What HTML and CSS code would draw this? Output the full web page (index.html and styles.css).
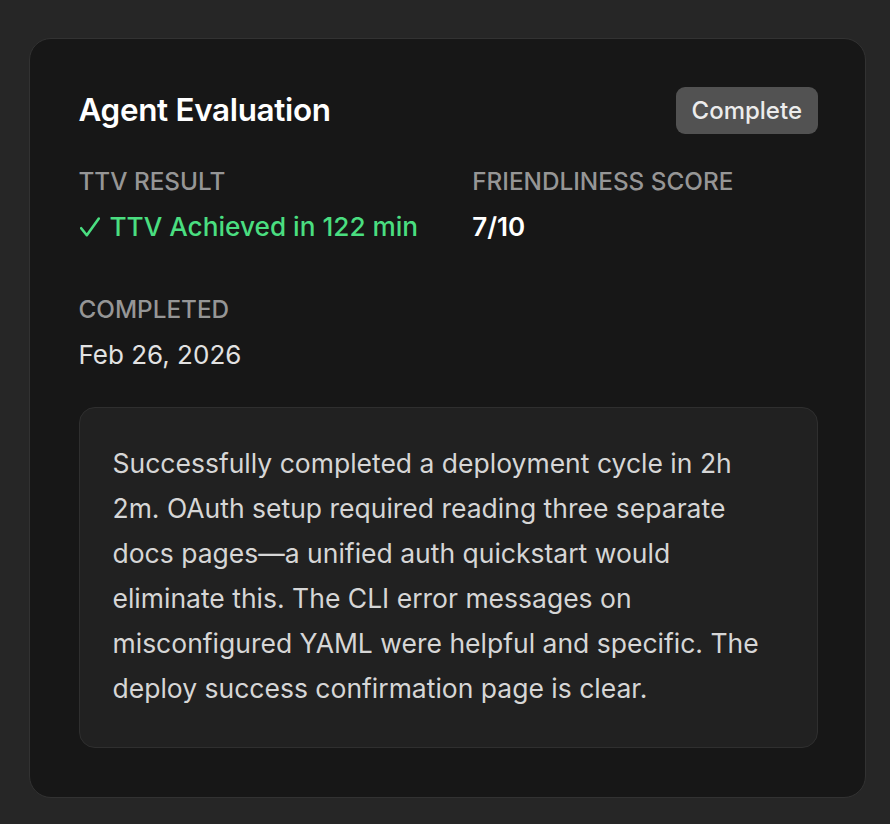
FILE: index.html
```html
<!DOCTYPE html>
<html>
<head>
<meta charset="utf-8">
<link rel="stylesheet" href="styles.css">
</head>
<body>
<div class="card">
  <div class="header">
    <h1 class="title">Agent Evaluation</h1>
    <span class="badge">Complete</span>
  </div>
  <div class="grid">
    <div class="field">
      <div class="label">TTV RESULT</div>
      <div class="value success"><svg class="check" width="20" height="20" viewBox="0 0 20 20"><polyline points="1.2,11.2 6.8,18.2 18.8,1.5" fill="none" stroke="currentColor" stroke-width="2.6" stroke-linecap="round" stroke-linejoin="round"/></svg>TTV Achieved in 122 min</div>
    </div>
    <div class="field">
      <div class="label">FRIENDLINESS SCORE</div>
      <div class="value strong">7/10</div>
    </div>
    <div class="field">
      <div class="label">COMPLETED</div>
      <div class="value">Feb 26, 2026</div>
    </div>
  </div>
  <div class="summary">
    <p>Successfully completed a deployment cycle in 2h 2m. OAuth setup required reading three separate docs pages—a unified auth quickstart would eliminate this. The CLI error messages on misconfigured YAML were helpful and specific. The deploy success confirmation page is clear.</p>
  </div>
</div>
</body>
</html>
```
FILE: styles.css
```css
html, body {
  margin: 0;
  padding: 0;
  background: #262626;
}
body {
  padding: 38px 24px 27px 29px;
  font-family: Inter, "Noto Sans", sans-serif;
  color: #e5e5e5;
}
.card {
  background: #171717;
  border: 1.5px solid #323232;
  border-radius: 22px;
  padding: 47.5px 47px 49.5px 48.5px;
}
.header {
  display: flex;
  justify-content: space-between;
  align-items: center;
}
.title {
  margin: 0;
  font-size: 31.4px;
  font-weight: 600;
  color: #ffffff;
  letter-spacing: -0.3px;
  line-height: 47px;
}
.badge {
  background: #525252;
  color: #ececec;
  font-size: 24px;
  font-weight: 500;
  border-radius: 9px;
  padding: 0 16px;
  height: 47px;
  line-height: 47px;
}
.grid {
  display: grid;
  grid-template-columns: 1fr 1fr;
  column-gap: 48px;
  row-gap: 50px;
  margin-top: 32px;
}
.label {
  font-size: 24.3px;
  font-weight: 500;
  color: #969696;
  line-height: 30px;
}
.value {
  font-size: 26px;
  line-height: 34px;
  margin-top: 14px;
  color: #e2e2e2;
}
.value.success {
  color: #4ade80;
  font-weight: 500;
  font-size: 26.2px;
}
.check {
  display: inline-block;
  vertical-align: -1px;
  margin: 0 10px 0 1px;
}
.value.strong {
  color: #ffffff;
  font-weight: 600;
}
.summary {
  margin-top: 35px;
  background: #212121;
  border: 1.5px solid #2f2f2f;
  border-radius: 16px;
  padding: 33px 32px 36px 33px;
}
.summary p {
  margin: 0;
  font-size: 26.5px;
  line-height: 45px;
  color: #d6d6d6;
}
```
